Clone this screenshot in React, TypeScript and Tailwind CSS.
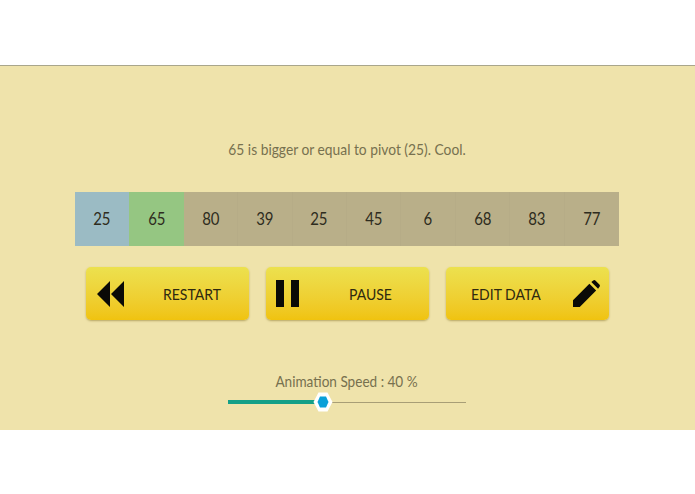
import React from "react";

const values = [25, 65, 80, 39, 25, 45, 6, 68, 83, 77];

const cellColor = (i: number) => {
  if (i === 0) return "bg-[#9bbbc4]";
  if (i === 1) return "bg-[#95c682]";
  return "bg-[#b9af89] border-r border-[#b6ac87] last:border-r-0";
};

const buttonClass =
  "w-[163px] h-[53px] rounded-[5px] flex items-center bg-gradient-to-b from-[#ece14e] to-[#f0c30e] shadow-[0_1px_2px_rgba(130,110,30,0.5)] text-[16px] text-[#2f2a10]";

const labelClass = "inline-block whitespace-nowrap origin-left scale-x-[0.875]";

const App: React.FC = () => {
  return (
    <div className="w-[695px] h-[494px] bg-white font-['Lato',sans-serif] overflow-hidden">
      <div className="h-[65px]" />

      {/* main panel */}
      <div className="h-[365px] bg-[#efe3ab] border-t border-[#a9a68c]">
        <div className="w-[694px] flex flex-col items-center">
          <p className="mt-[74px] h-[18px] leading-[18px] text-[15px] text-[#77714f] whitespace-nowrap scale-x-[0.92]">
            65 is bigger or equal to pivot (25). Cool.
          </p>

          {/* array */}
          <div className="mt-[34px] w-[544px] h-[54px] grid grid-cols-10">
            {values.map((v, i) => (
              <div
                key={i}
                className={`flex items-center justify-center text-[17px] text-[#2e2c20] ${cellColor(i)}`}
              >
                <span className="inline-block scale-x-[0.88]">{v}</span>
              </div>
            ))}
          </div>

          {/* buttons */}
          <div className="mt-[21px] flex gap-[17px]">
            <div className={buttonClass}>
              <svg width="28" height="28" viewBox="0 0 28 28" className="ml-[11px]">
                <path d="M0 14 L13 1 V27 Z M14 14 L27 1 V27 Z" fill="#0a0a06" />
              </svg>
              <span className={`ml-[38px] ${labelClass}`}>RESTART</span>
            </div>
            <div className={buttonClass}>
              <svg width="24" height="27" viewBox="0 0 24 27" className="ml-[10px]">
                <path d="M0 0 H8 V27 H0 Z M15 0 H23 V27 H15 Z" fill="#0a0a06" />
              </svg>
              <span className={`ml-[49px] ${labelClass}`}>PAUSE</span>
            </div>
            <div className={buttonClass}>
              <span className={`ml-[25px] ${labelClass}`}>EDIT DATA</span>
              <svg width="27" height="27" viewBox="0 0 28 28" className="ml-auto mr-[9px]">
                <path
                  d="M0 21 L17 4 L24 11 L7 28 H0 Z M19 2 L21 0.4 Q22 -0.3 23.2 0.4 L27.6 4.8 Q28.3 6 27.5 7 L26 9 Z"
                  fill="#0a0a06"
                />
              </svg>
            </div>
          </div>

          {/* speed slider */}
          <p className="mt-[52px] h-[18px] leading-[18px] text-[15px] text-[#77714f] whitespace-nowrap scale-x-[0.905]">
            Animation Speed : 40 %
          </p>
          <div className="mt-[2px] w-[238px] h-[20px] flex items-center relative">
            <div className="w-[95px] h-[4px] bg-[#14a088]" />
            <div className="flex-1 h-px bg-[#a89e76]" />
            <svg
              width="20"
              height="20"
              viewBox="0 0 20 20"
              className="absolute left-[85px] top-0"
            >
              <path d="M5.5 0.5 H14.5 L19.5 10 L14.5 19.5 H5.5 L0.5 10 Z" fill="#ffffff" />
              <path d="M7 4.5 H13 L15.5 10 L13 15.5 H7 L4.5 10 Z" fill="#0aa0d8" />
            </svg>
          </div>
        </div>
      </div>
    </div>
  );
};

export default App;
